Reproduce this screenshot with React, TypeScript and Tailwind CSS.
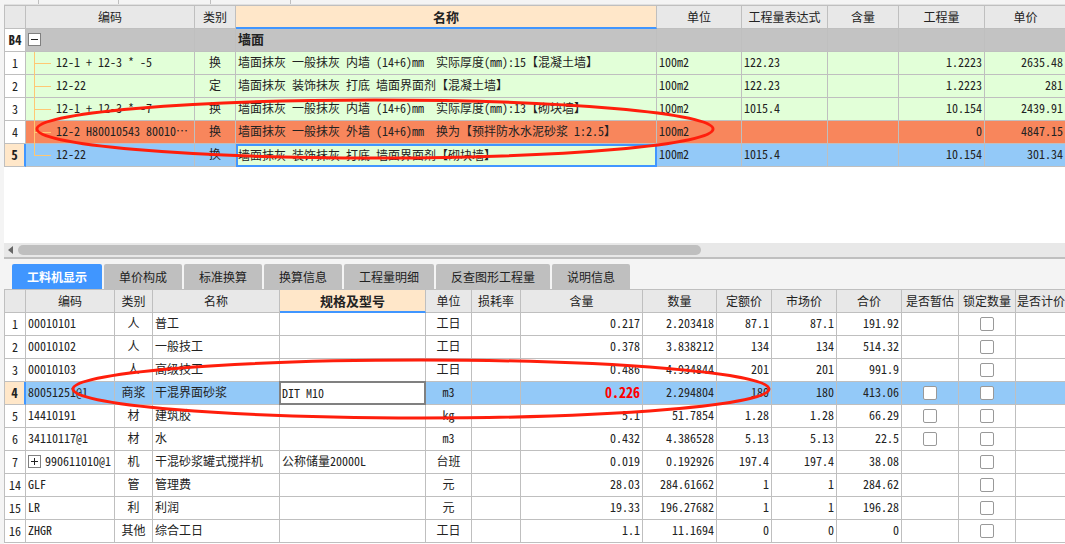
import React from 'react';

type Align = 'left' | 'center' | 'right';
interface Column {
  title: string;
  width?: number;
  align: Align;
  active?: boolean;
}

const alignClass: Record<Align, string> = {
  left: 'text-left',
  center: 'text-center',
  right: 'text-right',
};

const quotaColumns: Column[] = [
  { title: '', width: 21, align: 'center' },
  { title: '编码', width: 169, align: 'left' },
  { title: '类别', width: 41, align: 'center' },
  { title: '名称', width: 421, align: 'left', active: true },
  { title: '单位', width: 85, align: 'left' },
  { title: '工程量表达式', width: 86, align: 'left' },
  { title: '含量', width: 71, align: 'right' },
  { title: '工程量', width: 86, align: 'right' },
  { title: '单价', align: 'right' },
];

const quotaRows: string[][] = [
  ['1', '12-1 + 12-3 * -5', '换', '墙面抹灰 一般抹灰 内墙 (14+6)mm  实际厚度(mm):15【混凝土墙】', '100m2', '122.23', '', '1.2223', '2635.48'],
  ['2', '12-22', '定', '墙面抹灰 装饰抹灰 打底 墙面界面剂【混凝土墙】', '100m2', '122.23', '', '1.2223', '281'],
  ['3', '12-1 + 12-3 * -7', '换', '墙面抹灰 一般抹灰 内墙 (14+6)mm  实际厚度(mm):13【砌块墙】', '100m2', '1015.4', '', '10.154', '2439.91'],
  ['4', '12-2 H80010543 80010⋯', '换', '墙面抹灰 一般抹灰 外墙 (14+6)mm  换为【预拌防水水泥砂浆 1:2.5】', '100m2', '', '', '0', '4847.15'],
  ['5', '12-22', '换', '墙面抹灰 装饰抹灰 打底 墙面界面剂【砌块墙】', '100m2', '1015.4', '', '10.154', '301.34'],
];

const quotaRowColors = ['bg-[#e2ffd8]', 'bg-[#e2ffd8]', 'bg-[#e2ffd8]', 'bg-[#f8865c]', 'bg-[#93c9f8]'];

const resourceColumns: Column[] = [
  { title: '', width: 21, align: 'center' },
  { title: '编码', width: 89, align: 'left' },
  { title: '类别', width: 38, align: 'center' },
  { title: '名称', width: 127, align: 'left' },
  { title: '规格及型号', width: 146, align: 'left', active: true },
  { title: '单位', width: 46, align: 'center' },
  { title: '损耗率', width: 49, align: 'right' },
  { title: '含量', width: 122, align: 'right' },
  { title: '数量', width: 74, align: 'right' },
  { title: '定额价', width: 55, align: 'right' },
  { title: '市场价', width: 65, align: 'right' },
  { title: '合价', width: 65, align: 'right' },
  { title: '是否暂估', width: 57, align: 'center' },
  { title: '锁定数量', width: 57, align: 'center' },
  { title: '是否计价', align: 'left' },
];

const resourceRows: string[][] = [
  ['1', '00010101', '人', '普工', '', '工日', '', '0.217', '2.203418', '87.1', '87.1', '191.92'],
  ['2', '00010102', '人', '一般技工', '', '工日', '', '0.378', '3.838212', '134', '134', '514.32'],
  ['3', '00010103', '人', '高级技工', '', '工日', '', '0.486', '4.934844', '201', '201', '991.9'],
  ['4', '80051251@1', '商浆', '干混界面砂浆', 'DIT M10', 'm3', '', '0.226', '2.294804', '180', '180', '413.06'],
  ['5', '14410191', '材', '建筑胶', '', 'kg', '', '5.1', '51.7854', '1.28', '1.28', '66.29'],
  ['6', '34110117@1', '材', '水', '', 'm3', '', '0.432', '4.386528', '5.13', '5.13', '22.5'],
  ['7', '990611010@1', '机', '干混砂浆罐式搅拌机', '公称储量20000L', '台班', '', '0.019', '0.192926', '197.4', '197.4', '38.08'],
  ['14', 'GLF', '管', '管理费', '', '元', '', '28.03', '284.61662', '1', '1', '284.62'],
  ['15', 'LR', '利', '利润', '', '元', '', '19.33', '196.27682', '1', '1', '196.28'],
  ['16', 'ZHGR', '其他', '综合工日', '', '工日', '', '1.1', '11.1694', '0', '0', '0'],
];

const tabs = ['工料机显示', '单价构成', '标准换算', '换算信息', '工程量明细', '反查图形工程量', '说明信息'];

const tableClass = 'w-full table-fixed border-separate border-spacing-0 border-l border-[#bfbfbf] leading-4';
const cellClass =
  'h-[23px] overflow-hidden border-r border-b border-[#bfbfbf] px-0.5 pt-0 pb-0.5 whitespace-pre last:border-r-0';

function ColumnHeads({ columns }: { columns: Column[] }) {
  return (
    <>
      <colgroup>
        {columns.map((c, i) => (
          <col key={i} style={{ width: c.width }} />
        ))}
      </colgroup>
      <thead>
        <tr>
          {columns.map((c, i) => (
            <th
              key={i}
              scope="col"
              className={`h-6 border-t border-r border-t-[#bfbfbf] border-r-[#bfbfbf] px-px py-0 text-center whitespace-nowrap last:border-r-0 last:pr-0 ${
                c.active
                  ? 'border-b-2 border-b-[#4096ff] bg-[#ffe7c9] text-[13px] font-bold'
                  : 'border-b border-b-[#bfbfbf] bg-[#e8e8e8] font-normal'
              }`}
            >
              {c.title}
            </th>
          ))}
        </tr>
      </thead>
    </>
  );
}

function Toggle({ open }: { open: boolean }) {
  return (
    <button
      type="button"
      aria-label={open ? '折叠' : '展开'}
      className="flex size-[13px] shrink-0 items-center justify-center border border-[#808080] bg-white"
    >
      <svg viewBox="0 0 7 7" className="size-[7px]" shapeRendering="crispEdges">
        <path d={open ? 'M0 3.5H7' : 'M0 3.5H7M3.5 0V7'} stroke="#222" fill="none" />
      </svg>
    </button>
  );
}

function Branch({ last }: { last: boolean }) {
  return (
    <span className="flex h-[23px] w-7 shrink-0">
      <span className={`w-[9px] border-r border-[#ffc773] ${last ? 'h-3' : 'h-full'}`} />
      <span className="h-3 w-4 border-b border-[#ffc773]" />
    </span>
  );
}

function RowNumber({ value, selected }: { value: string; selected: boolean }) {
  return (
    <th
      scope="row"
      className={`h-[23px] border-b border-b-[#bfbfbf] p-0 text-center ${
        selected
          ? 'border-r-2 border-r-[#4096ff] bg-[#ffe7c9] text-[13px] font-bold'
          : 'border-r border-r-[#bfbfbf] bg-white font-normal'
      }`}
    >
      {value}
    </th>
  );
}

function QuotaTable() {
  return (
    <table className={tableClass}>
      <ColumnHeads columns={quotaColumns} />
      <tbody>
        <tr className="bg-[#c3c3c3]">
          <th
            scope="row"
            className="h-[23px] border-r border-b border-[#bfbfbf] bg-white p-0 text-center text-[13px] font-bold"
          >
            B4
          </th>
          <td className={cellClass}>
            <Toggle open />
          </td>
          <td className={cellClass} />
          <td className={`${cellClass} text-[13px] font-bold`}>墙面</td>
          {quotaColumns.slice(4).map((c) => (
            <td key={c.title} className={cellClass} />
          ))}
        </tr>
        {quotaRows.map((row, r) => (
          <tr key={row[0]} className={quotaRowColors[r]}>
            <RowNumber value={row[0]} selected={r === 4} />
            <td className="h-[23px] border-r border-b border-[#bfbfbf] p-0 whitespace-pre">
              <div className="-mb-px flex items-center">
                <Branch last={r === 4} />
                <span className="pb-1 pl-0.5">{row[1]}</span>
              </div>
            </td>
            {row.slice(2).map((text, i) => (
              <td
                key={i}
                className={
                  r === 4 && i === 1
                    ? 'h-[23px] border-2 border-[#4096ff] bg-[#e2ffd8] px-0 pt-0 pb-0.5 whitespace-pre'
                    : `${cellClass} ${alignClass[quotaColumns[i + 2].align]}`
                }
              >
                {text}
              </td>
            ))}
          </tr>
        ))}
      </tbody>
    </table>
  );
}

function CheckCell({ label, shown }: { label: string; shown: boolean }) {
  return (
    <td className="h-[23px] border-r border-b border-[#bfbfbf] p-0">
      {shown && (
        <input
          type="checkbox"
          aria-label={label}
          className="mx-auto block size-3.5 appearance-none rounded-xs border border-[#999] bg-white"
        />
      )}
    </td>
  );
}

function ResourceTable() {
  return (
    <table className={tableClass}>
      <ColumnHeads columns={resourceColumns} />
      <tbody>
        {resourceRows.map((row, r) => {
          const selected = r === 3;
          return (
            <tr key={row[0]} className={selected ? 'bg-[#93c9f8]' : 'bg-white'}>
              <RowNumber value={row[0]} selected={selected} />
              <td className={cellClass}>
                {row[0] === '7' ? (
                  <div className="flex items-center gap-1">
                    <Toggle open={false} />
                    {row[1]}
                  </div>
                ) : (
                  row[1]
                )}
              </td>
              {row.slice(2).map((text, i) =>
                selected && i === 2 ? (
                  <td key={i} className="h-[23px] p-0">
                    <input
                      type="text"
                      aria-label="规格及型号"
                      defaultValue={text}
                      className="-mt-px -ml-px block h-6 w-[calc(100%+1px)] border-2 border-[#808080] bg-white px-px pt-0 pb-0.5 outline-none"
                    />
                  </td>
                ) : (
                  <td
                    key={i}
                    className={`${cellClass} ${alignClass[resourceColumns[i + 2].align]} ${
                      selected && i === 5 ? 'text-sm leading-4 font-bold text-[#f00]' : ''
                    }`}
                  >
                    {text}
                  </td>
                ),
              )}
              <CheckCell label={`是否暂估 ${row[0]}`} shown={r >= 3 && r <= 5} />
              <CheckCell label={`锁定数量 ${row[0]}`} shown />
              <td className={cellClass} />
            </tr>
          );
        })}
      </tbody>
    </table>
  );
}

function Highlight({ className }: { className: string }) {
  return (
    <svg viewBox="0 0 700 62" preserveAspectRatio="none" className={`pointer-events-none absolute h-[62px] ${className}`}>
      <ellipse cx="350" cy="31" rx="348" ry="29" fill="none" stroke="#ff1e0c" strokeWidth="3" />
    </svg>
  );
}

export default function App() {
  return (
    <main
      lang="zh-CN"
      className="relative flex h-screen flex-col overflow-hidden bg-[#f4f4f4] pl-1 font-['Noto_Sans_Mono_CJK_SC','Noto_Sans_CJK_SC','Liberation_Mono',monospace] text-xs text-[#222]"
    >
      <div className="flex h-[5px] shrink-0 border-b border-[#e0e0e0]">
        <div className="w-[35px] border-r border-[#bfbfbf]" />
        <div className="w-20 border-r border-[#bfbfbf]" />
        <div className="w-[92px] border-r border-[#bfbfbf]" />
        <div className="w-20 border-r border-[#bfbfbf]" />
      </div>

      <section className="flex h-[238px] shrink-0 flex-col bg-white">
        <QuotaTable />
      </section>

      <div className="flex h-4 shrink-0 items-center border-b-2 border-[#bfbfbf] bg-[#e8e8e8] pl-1">
        <button type="button" aria-label="向左滚动" className="flex w-2.5 items-center">
          <svg viewBox="0 0 5 8" className="h-2 w-[5px]">
            <path d="M5 0V8L0 4Z" fill="#666" />
          </svg>
        </button>
        <div className="h-2.5 w-[683px] rounded-full bg-[#bfbfbf]" />
      </div>

      <nav className="flex shrink-0 gap-0.5 pt-[5px] pl-2" role="tablist">
        {tabs.map((t, i) => (
          <button
            key={t}
            type="button"
            role="tab"
            aria-selected={i === 0}
            className={`h-[25px] rounded-t-xs px-[15px] whitespace-nowrap ${
              i === 0 ? 'bg-[#4096ff] font-bold text-white' : 'bg-[#bfbfbf]'
            }`}
          >
            {t}
          </button>
        ))}
      </nav>

      <section className="min-h-0 flex-1 overflow-hidden bg-white">
        <ResourceTable />
      </section>

      <Highlight className="top-[98px] left-[35px] w-[680px]" />
      <Highlight className="top-[358px] left-[71px] w-[700px]" />
    </main>
  );
}
